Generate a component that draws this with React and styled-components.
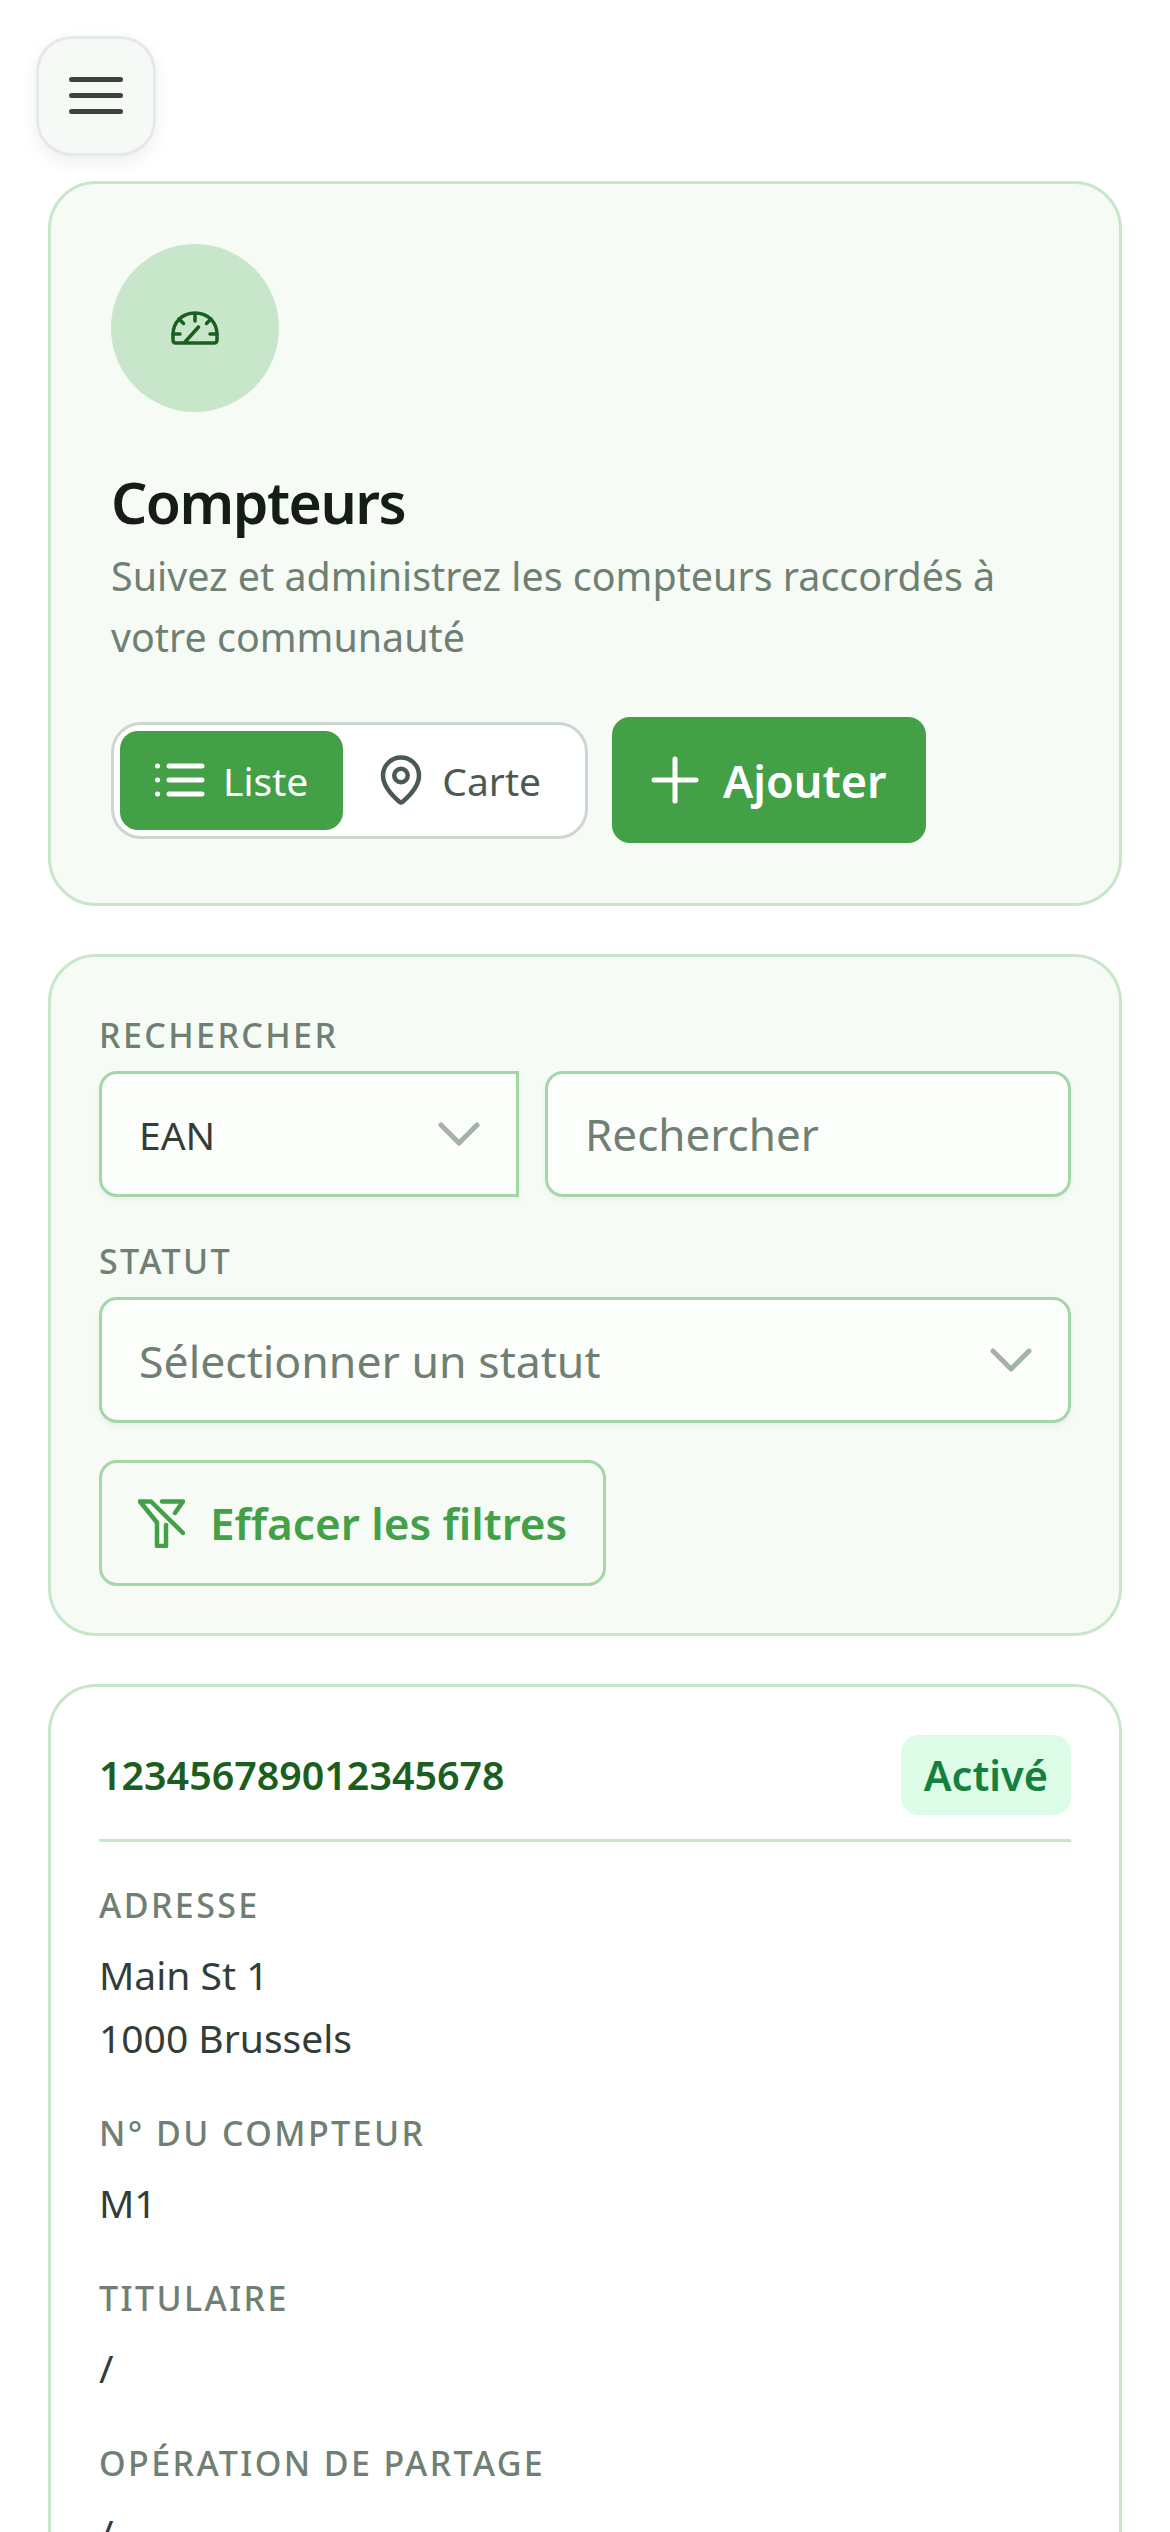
import React from "react";
import styled, {createGlobalStyle} from "styled-components";
import {MapPin} from "lucide-react";

const GlobalStyle = createGlobalStyle`
  html, body {
    margin: 0;
    padding: 0;
    background: #fff;
    font-family: "Noto Sans", "Open Sans", sans-serif;
    color: #333d37;
  }
  * { box-sizing: border-box; }
`;

const Page = styled.div`
  padding: 36px 48px 0;
  display: flex;
  flex-direction: column;
  gap: 48px;
`;

const MenuButton = styled.button`
  width: 120px;
  height: 120px;
  margin: 0 0 -23px -12px;
  padding: 0;
  display: flex;
  align-items: center;
  justify-content: center;
  background: #f7f9f7;
  border: 3px solid #e4eae6;
  border-radius: 36px;
  box-shadow: 0 6px 18px rgba(0, 0, 0, 0.07);
  color: #3a443e;
`;

const Card = styled.section`
  border: 3px solid #c8e6c9;
  border-radius: 48px;
  background: ${({$plain}) => ($plain ? "#fff" : "#f6fbf6")};
  padding: ${({$pad}) => $pad};
`;

const IconCircle = styled.div`
  width: 168px;
  height: 168px;
  border-radius: 50%;
  background: #c8e6c9;
  display: flex;
  align-items: center;
  justify-content: center;
  color: #1b5e20;
  margin-bottom: 54px;
`;

const Title = styled.h1`
  margin: 0;
  font-size: 57px;
  line-height: 72px;
  font-weight: 600;
  letter-spacing: -1.5px;
  color: #151d18;
`;

const Subtitle = styled.p`
  margin: 8px 0 49px;
  font-size: 39.4px;
  line-height: 61px;
  color: #6f8073;
`;

const Actions = styled.div`
  display: flex;
  align-items: center;
  gap: 24px;
`;

const Toggle = styled.div`
  display: flex;
  height: 117px;
  padding: 6px;
  gap: 6px;
  background: #fff;
  border: 3px solid #cdd6cf;
  border-radius: 30px;
`;

const ToggleItem = styled.div`
  display: flex;
  align-items: center;
  gap: ${({$active}) => ($active ? 18 : 14)}px;
  padding: ${({$active}) => ($active ? "0 35px" : "0 38px 0 25px")};
  border-radius: 18px;
  font-size: 39px;
  background: ${({$active}) => ($active ? "#43a047" : "transparent")};
  color: ${({$active}) => ($active ? "#fff" : "#4b5a50")};
`;

const PrimaryButton = styled.button`
  height: 126px;
  padding: 0 39px;
  display: flex;
  align-items: center;
  gap: 24px;
  background: #43a047;
  color: #fff;
  border: 0;
  border-radius: 18px;
  font-family: inherit;
  font-size: 45px;
  font-weight: 600;
`;

const Label = styled.div`
  font-size: 34px;
  line-height: 48px;
  font-weight: 500;
  letter-spacing: 2.4px;
  text-transform: uppercase;
  color: #6f8073;
`;

const FieldRow = styled.div`
  display: flex;
  gap: 26px;
  margin: 12px 0 40px;
`;

const Field = styled.div`
  flex: ${({$flex}) => $flex};
  height: 126px;
  padding: 0 36px 0 37px;
  display: flex;
  align-items: center;
  justify-content: space-between;
  background: #fcfefc;
  border: 3px solid #a5d6a7;
  border-radius: ${({$square}) => ($square ? "18px 0 0 18px" : "18px")};
  box-shadow: 0 3px 6px rgba(0, 0, 0, 0.05);
  font-size: ${({$size}) => $size}px;
  color: ${({$muted}) => ($muted ? "#6f8073" : "#333d37")};
`;

const GhostButton = styled.button`
  height: 126px;
  margin-top: -3px;
  padding: 0 36px;
  display: flex;
  align-items: center;
  gap: 25px;
  background: transparent;
  border: 3px solid #a5d6a7;
  border-radius: 18px;
  color: #43a047;
  font-family: inherit;
  font-size: 44px;
  font-weight: 600;
`;

const CardHeader = styled.div`
  display: flex;
  align-items: center;
  justify-content: space-between;
  padding-bottom: 24px;
  border-bottom: 3px solid #c8e6c9;
  margin-bottom: 39px;
`;

const Ean = styled.div`
  font-size: 39.4px;
  font-weight: 600;
  color: #1b5e20;
`;

const Badge = styled.div`
  height: 80px;
  padding: 0 23px;
  display: flex;
  align-items: center;
  border-radius: 18px;
  background: #dcfce7;
  color: #15803d;
  font-size: 41.5px;
  font-weight: 600;
`;

const Value = styled.div`
  margin: 14px 0 40px;
  font-size: 39px;
  line-height: 63px;
  color: #333d37;
`;

const GaugeIcon = () => (
  <svg width="48" height="34" viewBox="0 0 48 34" fill="none" stroke="currentColor" strokeWidth="3.5" strokeLinecap="round" strokeLinejoin="round">
    <path d="M24 2C11 2 2 11 2 24v5c0 2 1 3 3 3h38c2 0 3-1 3-3v-5C46 11 37 2 24 2Z" />
    <path d="M24 3v7M8 8l4.5 4.5M40 8l-4.5 4.5M2 23h7M39 23h7M14 31l13.5-15" />
  </svg>
);

const ListIcon = () => (
  <svg width="50" height="36" viewBox="0 0 50 36" fill="none" stroke="currentColor" strokeWidth="5" strokeLinecap="round">
    <path d="M14 4h33M14 18h33M14 32h33M2.5 4h.1M2.5 18h.1M2.5 32h.1" />
  </svg>
);

const PlusIcon = () => (
  <svg width="48" height="48" viewBox="0 0 48 48" fill="none" stroke="currentColor" strokeWidth="5" strokeLinecap="round">
    <path d="M24 3v42M3 24h42" />
  </svg>
);

const ChevronIcon = () => (
  <svg width="42" height="24" viewBox="0 0 42 24" fill="none" stroke="#a3b2a7" strokeWidth="5" strokeLinecap="round" strokeLinejoin="round">
    <path d="M3 3l18 18L39 3" />
  </svg>
);

const ClearFilterIcon = () => (
  <svg width="47" height="49" viewBox="8 9 47 49" fill="none" stroke="#43a047" strokeWidth="4.5" strokeLinecap="round" strokeLinejoin="round">
    <path d="M10 11.5h11L53 43M10 11.5l17 21V56h9V35" />
    <path d="M32 11.5h21L45 23" />
  </svg>
);

const meterFields = [
  {label: "Adresse", lines: ["Main St 1", "1000 Brussels"]},
  {label: "N° du compteur", lines: ["M1"]},
  {label: "Titulaire", lines: ["/"]},
  {label: "Opération de partage", lines: ["/"]},
];

export default function App() {
  return (
    <Page>
      <GlobalStyle />
      <MenuButton aria-label="Menu">
        <svg width="54" height="38" viewBox="0 0 54 38" fill="currentColor">
          <rect y="0" width="54" height="5" rx="2.5" />
          <rect y="16" width="54" height="5" rx="2.5" />
          <rect y="32" width="54" height="5" rx="2.5" />
        </svg>
      </MenuButton>

      <Card $pad="60px">
        <IconCircle><GaugeIcon /></IconCircle>
        <Title>Compteurs</Title>
        <Subtitle>Suivez et administrez les compteurs raccordés à votre communauté</Subtitle>
        <Actions>
          <Toggle>
            <ToggleItem $active><ListIcon />Liste</ToggleItem>
            <ToggleItem><MapPin size={54} strokeWidth={2} />Carte</ToggleItem>
          </Toggle>
          <PrimaryButton><PlusIcon />Ajouter</PrimaryButton>
        </Actions>
      </Card>

      <Card $pad="54px 48px 47px">
        <Label>Rechercher</Label>
        <FieldRow>
          <Field $flex="0 0 420px" $square $size={39}>EAN<ChevronIcon /></Field>
          <Field $flex="1" $size={44} $muted>Rechercher</Field>
        </FieldRow>
        <Label>Statut</Label>
        <FieldRow>
          <Field $flex="1" $size={44.6} $muted>Sélectionner un statut<ChevronIcon /></Field>
        </FieldRow>
        <GhostButton><ClearFilterIcon />Effacer les filtres</GhostButton>
      </Card>

      <Card $plain $pad="48px">
        <CardHeader>
          <Ean>123456789012345678</Ean>
          <Badge>Activé</Badge>
        </CardHeader>
        {meterFields.map((field) => (
          <div key={field.label}>
            <Label>{field.label}</Label>
            <Value>{field.lines.map((line) => <div key={line}>{line}</div>)}</Value>
          </div>
        ))}
      </Card>
    </Page>
  );
}
